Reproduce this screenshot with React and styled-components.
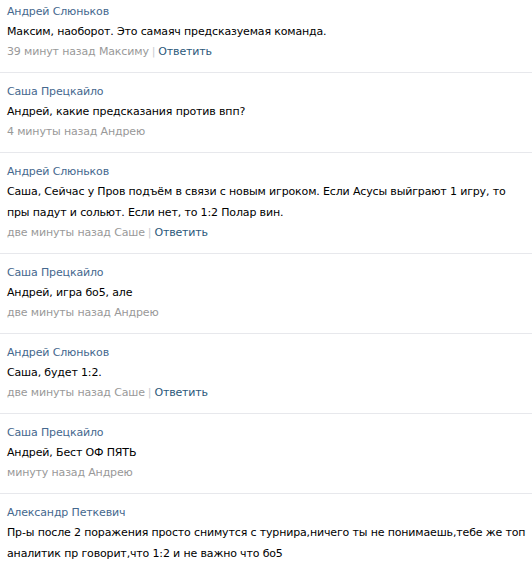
import styled, { createGlobalStyle } from "styled-components"

const Global = createGlobalStyle`
    body {
        margin: 0;
        background: #fff;
        font-family: "DejaVu Sans", Tahoma, sans-serif;
        font-size: 11px;
        letter-spacing: -0.15px;
    }
`

const List = styled.div`
    margin-top: -7px;
    width: 532px;
`
const Item = styled.div`
    padding: 10px 5px 10px 7px;
    border-bottom: 1px solid #e7e8ec;
`
const Author = styled.div`
    color: #45688e;
    line-height: 18px;
`
const Text = styled.div`
    color: #000;
    line-height: 21px;
`
const Meta = styled.div`
    color: #999;
    line-height: 20px;
`
const Sep = styled.span`
    color: #c8ccd2;
    margin: 0 3px;
`
const Reply = styled.span`
    color: #2b587a;
    cursor: pointer;
`

const comments = [
    { author: "Андрей Слюньков", text: "Максим, наоборот. Это самаяч предсказуемая команда.", meta: "39 минут назад Максиму", reply: true },
    { author: "Саша Прецкайло", text: "Андрей, какие предсказания против впп?", meta: "4 минуты назад Андрею" },
    { author: "Андрей Слюньков", text: "Саша, Сейчас у Пров подъём в связи с новым игроком. Если Асусы выйграют 1 игру, то пры падут и сольют. Если нет, то 1:2 Полар вин.", meta: "две минуты назад Саше", reply: true },
    { author: "Саша Прецкайло", text: "Андрей, игра бо5, але", meta: "две минуты назад Андрею" },
    { author: "Андрей Слюньков", text: "Саша, будет 1:2.", meta: "две минуты назад Саше", reply: true },
    { author: "Саша Прецкайло", text: "Андрей, Бест ОФ ПЯТЬ", meta: "минуту назад Андрею" },
    { author: "Александр Петкевич", text: "Пр-ы после 2 поражения просто снимутся с турнира,ничего ты не понимаешь,тебе же топ аналитик пр говорит,что 1:2 и не важно что бо5", meta: "" },
]

const App = () => {
    return (
        <>
            <Global />
            <List>
                {comments.map((c, i) => (
                    <Item key={i}>
                        <Author>{c.author}</Author>
                        <Text>{c.text}</Text>
                        {c.meta && (
                            <Meta>
                                {c.meta}
                                {c.reply && <><Sep>|</Sep><Reply>Ответить</Reply></>}
                            </Meta>
                        )}
                    </Item>
                ))}
            </List>
        </>
    )
}

export default App
